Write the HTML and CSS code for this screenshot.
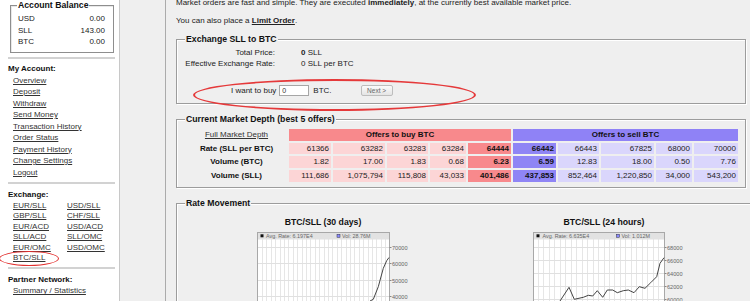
FILE: index.html
```html
<!DOCTYPE html>
<html lang="en">
<head>
<meta charset="utf-8">
<title>Market Order</title>
<link rel="stylesheet" href="styles.css">
</head>
<body>
<div class="page">
  <aside class="sidebar">
    <fieldset class="balance">
      <legend>Account Balance</legend>
      <div class="bal-row"><span>USD</span><span>0.00</span></div>
      <div class="bal-row"><span>SLL</span><span>143.00</span></div>
      <div class="bal-row"><span>BTC</span><span>0.00</span></div>
    </fieldset>
    <hr class="sep">
    <h3 class="nav-title">My Account:</h3>
    <ul class="nav">
      <li><a href="#">Overview</a></li>
      <li><a href="#">Deposit</a></li>
      <li><a href="#">Withdraw</a></li>
      <li><a href="#">Send Money</a></li>
      <li><a href="#">Transaction History</a></li>
      <li><a href="#">Order Status</a></li>
      <li><a href="#">Payment History</a></li>
      <li><a href="#">Change Settings</a></li>
      <li><a href="#">Logout</a></li>
    </ul>
    <hr class="sep">
    <h3 class="nav-title">Exchange:</h3>
    <ul class="pairs">
      <li><a href="#">EUR/SLL</a></li>
      <li><a href="#">USD/SLL</a></li>
      <li><a href="#">GBP/SLL</a></li>
      <li><a href="#">CHF/SLL</a></li>
      <li><a href="#">EUR/ACD</a></li>
      <li><a href="#">USD/ACD</a></li>
      <li><a href="#">SLL/ACD</a></li>
      <li><a href="#">SLL/OMC</a></li>
      <li><a href="#">EUR/OMC</a></li>
      <li><a href="#">USD/OMC</a></li>
      <li class="circled"><a href="#">BTC/SLL</a></li>
    </ul>
    <hr class="sep">
    <h3 class="nav-title">Partner Network:</h3>
    <ul class="nav">
      <li><a href="#">Summary / Statistics</a></li>
    </ul>
  </aside>

  <main class="main">
    <p class="intro">Market orders are fast and simple. They are executed <b>immediately</b>, at the currently best available market price.</p>
    <p class="note">You can also place a <a href="#" class="strong-link">Limit Order</a>.</p>

    <fieldset class="box box-exchange">
      <legend>Exchange SLL to BTC</legend>
      <div class="summary">
        <span class="sum-label">Total Price:</span><span><b>0</b> SLL</span>
        <span class="sum-label">Effective Exchange Rate:</span><span>0 SLL per BTC</span>
      </div>
      <form class="buy-row">
        <span>I want to buy</span>
        <input class="qty" type="text" value="0">
        <span class="unit">BTC.</span>
        <button class="next" type="button">Next &gt;</button>
      </form>
    </fieldset>

    <fieldset class="box box-depth">
      <legend>Current Market Depth (best 5 offers)</legend>
      <div class="depth">
        <div class="dcell head-label"><a href="#">Full Market Depth</a></div>
        <div class="dcell head buy-head">Offers to buy BTC</div>
        <div class="dcell head sell-head">Offers to sell BTC</div>

        <div class="dcell row-label">Rate (SLL per BTC)</div>
        <div class="dcell buy">61366</div>
        <div class="dcell buy">63282</div>
        <div class="dcell buy">63283</div>
        <div class="dcell buy">63284</div>
        <div class="dcell buy best">64444</div>
        <div class="dcell sell best">66442</div>
        <div class="dcell sell">66443</div>
        <div class="dcell sell">67825</div>
        <div class="dcell sell">68000</div>
        <div class="dcell sell">70000</div>

        <div class="dcell row-label">Volume (BTC)</div>
        <div class="dcell buy">1.82</div>
        <div class="dcell buy">17.00</div>
        <div class="dcell buy">1.83</div>
        <div class="dcell buy">0.68</div>
        <div class="dcell buy best">6.23</div>
        <div class="dcell sell best">6.59</div>
        <div class="dcell sell">12.83</div>
        <div class="dcell sell">18.00</div>
        <div class="dcell sell">0.50</div>
        <div class="dcell sell">7.76</div>

        <div class="dcell row-label">Volume (SLL)</div>
        <div class="dcell buy">111,686</div>
        <div class="dcell buy">1,075,794</div>
        <div class="dcell buy">115,808</div>
        <div class="dcell buy">43,033</div>
        <div class="dcell buy best">401,486</div>
        <div class="dcell sell best">437,853</div>
        <div class="dcell sell">852,464</div>
        <div class="dcell sell">1,220,850</div>
        <div class="dcell sell">34,000</div>
        <div class="dcell sell">543,200</div>
      </div>
    </fieldset>

    <fieldset class="box box-rate">
      <legend>Rate Movement</legend>
      <div class="charts">
        <figure class="chart">
          <figcaption>BTC/SLL (30 days)</figcaption>
          <svg width="180" height="100" viewBox="0 0 180 100">
            <rect x="24.5" y="2.5" width="132" height="110" fill="#fff" stroke="#a8a8a8"/>
            <path d="M29.5 9V112M33.5 9V112M38.5 9V112M42.5 9V112M47.5 9V112M51.5 9V112M55.5 9V112M60.5 9V112M64.5 9V112M69.5 9V112M73.5 9V112M77.5 9V112M82.5 9V112M86.5 9V112M91.5 9V112M95.5 9V112M99.5 9V112M104.5 9V112M108.5 9V112M113.5 9V112M117.5 9V112M121.5 9V112M126.5 9V112M130.5 9V112M135.5 9V112M139.5 9V112M143.5 9V112M148.5 9V112M152.5 9V112" stroke="#e6e6e6" fill="none"/>
            <path d="M25 17.5H156M25 33.5H156M25 50.5H156M25 66.5H156M25 82.5H156M25 99.5H156" stroke="#e0e0e0" fill="none"/>
            <rect x="25" y="3" width="131" height="6.5" fill="#e2e2e2"/>
            <rect x="27.5" y="4.3" width="3" height="3" fill="#111"/>
            <text x="33" y="7.8" class="leg">Avg. Rate: 6.197E4</text>
            <rect x="104" y="4.3" width="3" height="3" fill="#8a8aff" stroke="#334" stroke-width="0.5"/>
            <text x="109" y="7.8" class="leg">Vol: 28.76M</text>
            <path d="M156.5 17.5h2M156.5 33.5h2M156.5 50.5h2M156.5 66.5h2M156.5 82.5h2" stroke="#888" fill="none"/>
            <text x="159" y="19.5" class="axis">70000</text>
            <text x="159" y="35.5" class="axis">60000</text>
            <text x="159" y="52.5" class="axis">50000</text>
            <text x="159" y="68.5" class="axis">40000</text>
            <text x="159" y="84.5" class="axis">30000</text>
            <polyline points="24,92 80,91 120,88 134,76 137,71 140.3,69.3 145.3,56.7 150.3,38.3 153.7,30.7 156,27.5" fill="none" stroke="#444" stroke-width="1"/>
          </svg>
        </figure>
        <figure class="chart">
          <figcaption>BTC/SLL (24 hours)</figcaption>
          <svg width="180" height="100" viewBox="0 0 180 100">
            <rect x="19.5" y="2.5" width="131" height="110" fill="#fff" stroke="#a8a8a8"/>
            <path d="M24.5 9V112M29.5 9V112M35.5 9V112M40.5 9V112M46.5 9V112M51.5 9V112M57.5 9V112M62.5 9V112M68.5 9V112M73.5 9V112M79.5 9V112M84.5 9V112M90.5 9V112M95.5 9V112M100.5 9V112M106.5 9V112M111.5 9V112M117.5 9V112M122.5 9V112M128.5 9V112M133.5 9V112M139.5 9V112M144.5 9V112" stroke="#e6e6e6" fill="none"/>
            <path d="M20 17.5H150M20 30.5H150M20 43.5H150M20 56.5H150M20 69.5H150M20 82.5H150M20 95.5H150" stroke="#e0e0e0" fill="none"/>
            <rect x="20" y="3" width="130" height="6.5" fill="#e2e2e2"/>
            <rect x="22.5" y="4.3" width="3" height="3" fill="#111"/>
            <text x="28.5" y="7.8" class="leg">Avg. Rate: 6.635E4</text>
            <rect x="102.5" y="4.3" width="3" height="3" fill="#8a8aff" stroke="#334" stroke-width="0.5"/>
            <text x="107.5" y="7.8" class="leg">Vol: 1.012M</text>
            <path d="M150.5 17.5h2M150.5 30.5h2M150.5 43.5h2M150.5 56.5h2M150.5 69.5h2M150.5 82.5h2" stroke="#888" fill="none"/>
            <text x="153" y="19.5" class="axis">68000</text>
            <text x="153" y="32.5" class="axis">66000</text>
            <text x="153" y="45.5" class="axis">64000</text>
            <text x="153" y="58.5" class="axis">62000</text>
            <text x="153" y="71.5" class="axis">60000</text>
            <polyline points="36,90 46,71 55,57.3 60.3,69.3 69.3,67.3 74.3,65.3 78.7,66 83.3,60.7 88.7,67.3 93.3,60 98.7,60 103.3,62.7 109.3,60.7 114.3,60 120,62.7 125.3,56.7 131,58.3 136.7,52.7 142.7,46.7 146,33.3 150,27.7" fill="none" stroke="#444" stroke-width="1"/>
          </svg>
        </figure>
      </div>
    </fieldset>
  </main>
</div>
</body>
</html>
```

FILE: styles.css
```css
* { box-sizing: border-box; }

html, body {
  margin: 0;
  padding: 0;
}

body {
  background: #efefef;
  font-family: "Liberation Sans", Arial, Helvetica, sans-serif;
  font-size: 8px;
  color: #222;
  overflow: hidden;
}

a { color: #333; text-decoration: underline; }

.page {
  display: flex;
  align-items: stretch;
  min-height: 301px;
}

/* ---------- sidebar ---------- */
.sidebar {
  width: 120px;
  flex: none;
  background: #fff;
  border-right: 1px solid #c8c8c8;
  padding: 0 4px 0 8px;
}

.balance {
  margin: 0 1px 3px 2px;
  padding: 2px 8px 4px 6px;
  border: 1px solid #8e8e8e;
  box-shadow: inset 1px 1px 0 #e8e8e8;
}

.balance legend {
  padding: 0 1px;
  font-size: 8.7px;
  line-height: 11px;
  font-weight: bold;
  background: #fff;
  color: #111;
}

.bal-row {
  display: flex;
  justify-content: space-between;
  padding-left: 1px;
  line-height: 11.5px;
}

.sep {
  height: 0;
  border: 0;
  border-top: 2px solid #d2d2d2;
  margin: 4px 0 4.5px;
}

.nav-title {
  margin: 0;
  font-size: 8px;
  line-height: 11.5px;
  font-weight: bold;
  color: #111;
}

.nav {
  list-style: none;
  margin: 0;
  padding: 0 0 0 5px;
  line-height: 11.5px;
}

.pairs {
  list-style: none;
  margin: 1px 0 0;
  padding: 0 0 0 5px;
  display: grid;
  grid-template-columns: 54px auto;
  line-height: 10.4px;
}

.circled { position: relative; }

.circled::after {
  content: "";
  position: absolute;
  left: -14px;
  top: -2px;
  width: 58px;
  height: 13px;
  border: 1.5px solid #e2302f;
  border-radius: 50%;
}

/* ---------- main ---------- */
.main {
  flex: 1;
  margin-left: 45px;
  border-left: 1px solid #ababab;
  padding: 0 4px 0 10px;
  min-width: 0;
}

.intro {
  margin: -3px 0 7px;
  line-height: 11px;
}

.note {
  margin: 0 0 7.5px;
  line-height: 11px;
}

.strong-link {
  font-weight: bold;
  color: #222;
}

.box {
  margin: 0;
  padding: 2.5px 8px 7.5px 8px;
  border: 1px solid #9c9c9c;
  box-shadow: inset 1px 1px 0 #fff, 1px 1px 0 #fff;
}

.box legend {
  padding: 0 1px;
  font-size: 8.7px;
  line-height: 11px;
  font-weight: bold;
  background: #efefef;
  color: #111;
}

.summary {
  display: grid;
  grid-template-columns: 90px auto;
  column-gap: 26px;
  line-height: 11.4px;
}

.sum-label { text-align: right; }

.buy-row {
  position: relative;
  display: flex;
  align-items: center;
  height: 11px;
  margin: 14.7px 0 0 46px;
}

.buy-row::after {
  content: "";
  position: absolute;
  left: -38px;
  top: -5.5px;
  width: 279px;
  height: 28px;
  border: 2px solid #e5393a;
  border-radius: 50%;
  pointer-events: none;
}

.qty {
  width: 30px;
  height: 11px;
  margin: 0 0 0 3px;
  padding: 0 2px;
  border: 1px solid #a6a6a6;
  background: #fff;
  font-family: "Liberation Sans", Arial, sans-serif;
  font-size: 7px;
  color: #333;
}

.unit { margin-left: 4px; }

.next {
  width: 32px;
  height: 11px;
  margin-left: 29px;
  padding: 0;
  border: 1px solid #bdbdbd;
  border-radius: 2px;
  background: linear-gradient(#fbfbfb, #e4e4e4);
  font-family: "Liberation Sans", Arial, sans-serif;
  font-size: 6.5px;
  color: #666;
  line-height: 9px;
}

.box-depth {
  margin-top: 10px;
  padding: 4px 7px 5px 8px;
}

.depth {
  display: grid;
  grid-template-columns: 101px 42px 52px 41px 36px 43px 43px 41px 53px 36px 44px;
  grid-auto-rows: 11.7px;
  gap: 2px;
  margin-left: 1px;
  line-height: 11.7px;
}

.dcell {
  padding: 0 2px;
  text-align: right;
  white-space: nowrap;
}

.head-label { text-align: center; }
.head-label a { color: #333; }

.head {
  text-align: center;
  font-weight: bold;
  color: #111;
}

.buy-head { grid-column: 2 / span 5; background: #f8898c; }
.sell-head { grid-column: 7 / span 5; background: #8f82f6; }

.row-label {
  text-align: center;
  font-weight: bold;
  color: #111;
}

.buy { background: #fcd5d6; }
.sell { background: #dad6fc; }
.buy.best { background: #f8898c; font-weight: bold; color: #111; }
.sell.best { background: #8f85f5; font-weight: bold; color: #111; }

.box-rate {
  margin-top: 10.5px;
  padding: 6.5px 7px 10px 8px;
}

.charts {
  display: grid;
  grid-template-columns: 276px 286px;
}

.chart {
  margin: 0;
  display: flex;
  flex-direction: column;
  align-items: center;
}

.chart figcaption {
  font-size: 8.7px;
  line-height: 12px;
  font-weight: bold;
  color: #111;
  margin-bottom: 2px;
}

.chart svg { display: block; }

.chart .leg {
  font-family: "Liberation Sans", Arial, sans-serif;
  font-size: 5.4px;
  fill: #666;
}

.chart .axis {
  font-family: "Liberation Sans", Arial, sans-serif;
  font-size: 5.6px;
  fill: #666;
}
```
